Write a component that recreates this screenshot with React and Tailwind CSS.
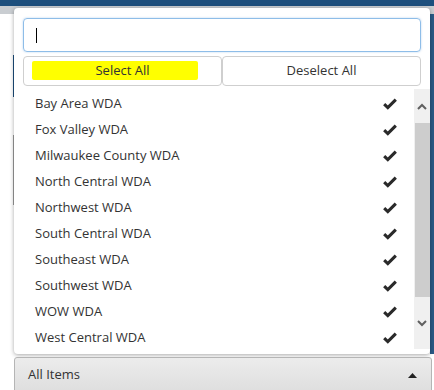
import React from "react";

const items = [
  "Bay Area WDA",
  "Fox Valley WDA",
  "Milwaukee County WDA",
  "North Central WDA",
  "Northwest WDA",
  "South Central WDA",
  "Southeast WDA",
  "Southwest WDA",
  "WOW WDA",
  "West Central WDA",
];

function Check() {
  return (
    <svg width="14" height="12" viewBox="0 0 14 12" className="block">
      <path d="M1.2 6.2 L4.8 9.6 L12.8 1.6" fill="none" stroke="#2a2a2a" strokeWidth="3.1" strokeLinecap="butt" strokeLinejoin="miter" />
    </svg>
  );
}

export default function App() {
  return (
    <div className="relative w-[434px] h-[390px] overflow-hidden bg-white" style={{ fontFamily: '"Open Sans", "DejaVu Sans", sans-serif' }}>
      {/* background page */}
      <div className="absolute left-0 top-0 w-[434px] h-[6px] bg-[#1d4f7d]" />
      <div className="absolute left-0 top-[6px] w-[434px] h-[8px] bg-[#c9cdd1]" />
      <div className="absolute left-[13px] top-[55px] w-[3px] h-[42px] bg-[#1d4f7d]" />
      <div className="absolute left-[13px] top-[135px] w-[3px] h-[70px] bg-[#9a9a9a]" />
      <div className="absolute left-[430px] top-[14px] w-[4px] h-[340px] bg-[#2a5a86]" />

      {/* dropdown panel */}
      <div className="absolute left-[14px] top-[8px] w-[416px] h-[346px] bg-white rounded-[4px] shadow-[0_1px_4px_rgba(0,0,0,0.35)] flex flex-col">
        <div className="pt-[10px] px-[9px]">
          <div className="h-[34px] border border-[#8ebde8] rounded-[4px] shadow-[0_0_2px_rgba(100,160,220,0.5)] flex items-center pl-[12px]">
            <div className="w-[1px] h-[15px] bg-black" />
          </div>
          <div className="mt-[4px] flex">
            <button className="relative w-[199px] h-[30px] border border-[#cfcfcf] rounded-[4px] bg-white text-[13px] text-[#333] flex items-center justify-center">
              <span className="absolute left-[8px] top-[4px] w-[166px] h-[19px] bg-[#ffff00] rounded-[2px]" />
              <span className="relative">Select All</span>
            </button>
            <button className="w-[199px] h-[30px] border border-[#cfcfcf] rounded-[4px] bg-white text-[13px] text-[#333] flex items-center justify-center">
              Deselect All
            </button>
          </div>
        </div>
        <div className="flex flex-1 mt-[3px]">
          <div className="flex-1 flex flex-col pt-[2px]">
            {items.map((t) => (
              <div key={t} className="h-[26px] flex items-center justify-between pl-[21px] pr-[17px] text-[13px] text-[#333]">
                <span>{t}</span>
                <Check />
              </div>
            ))}
          </div>
          <div className="w-[16px] h-[260px] bg-[#f0f0f0] flex flex-col items-center">
            <div className="h-[34px] flex items-center justify-center">
              <svg width="10" height="7" viewBox="0 0 10 7"><path d="M1 6 L5 2 L9 6" fill="none" stroke="#606060" strokeWidth="2" /></svg>
            </div>
            <div className="w-[15px] h-[174px] bg-[#cdcdcd]" />
            <div className="flex-1 flex items-center justify-center">
              <svg width="10" height="7" viewBox="0 0 10 7"><path d="M1 1 L5 5 L9 1" fill="none" stroke="#606060" strokeWidth="2" /></svg>
            </div>
          </div>
        </div>
      </div>

      {/* bottom select */}
      <div className="absolute left-[14px] top-[357px] w-[418px] h-[36px] border border-[#b5b5b5] rounded-[3px] bg-gradient-to-b from-[#ececec] to-[#dedede] flex items-center justify-between pl-[13px] pr-[14px] text-[13px] text-[#333]">
        <span>All Items</span>
        <svg width="9" height="5" viewBox="0 0 9 5"><path d="M0 5 L4.5 0 L9 5 Z" fill="#222" /></svg>
      </div>
    </div>
  );
}
